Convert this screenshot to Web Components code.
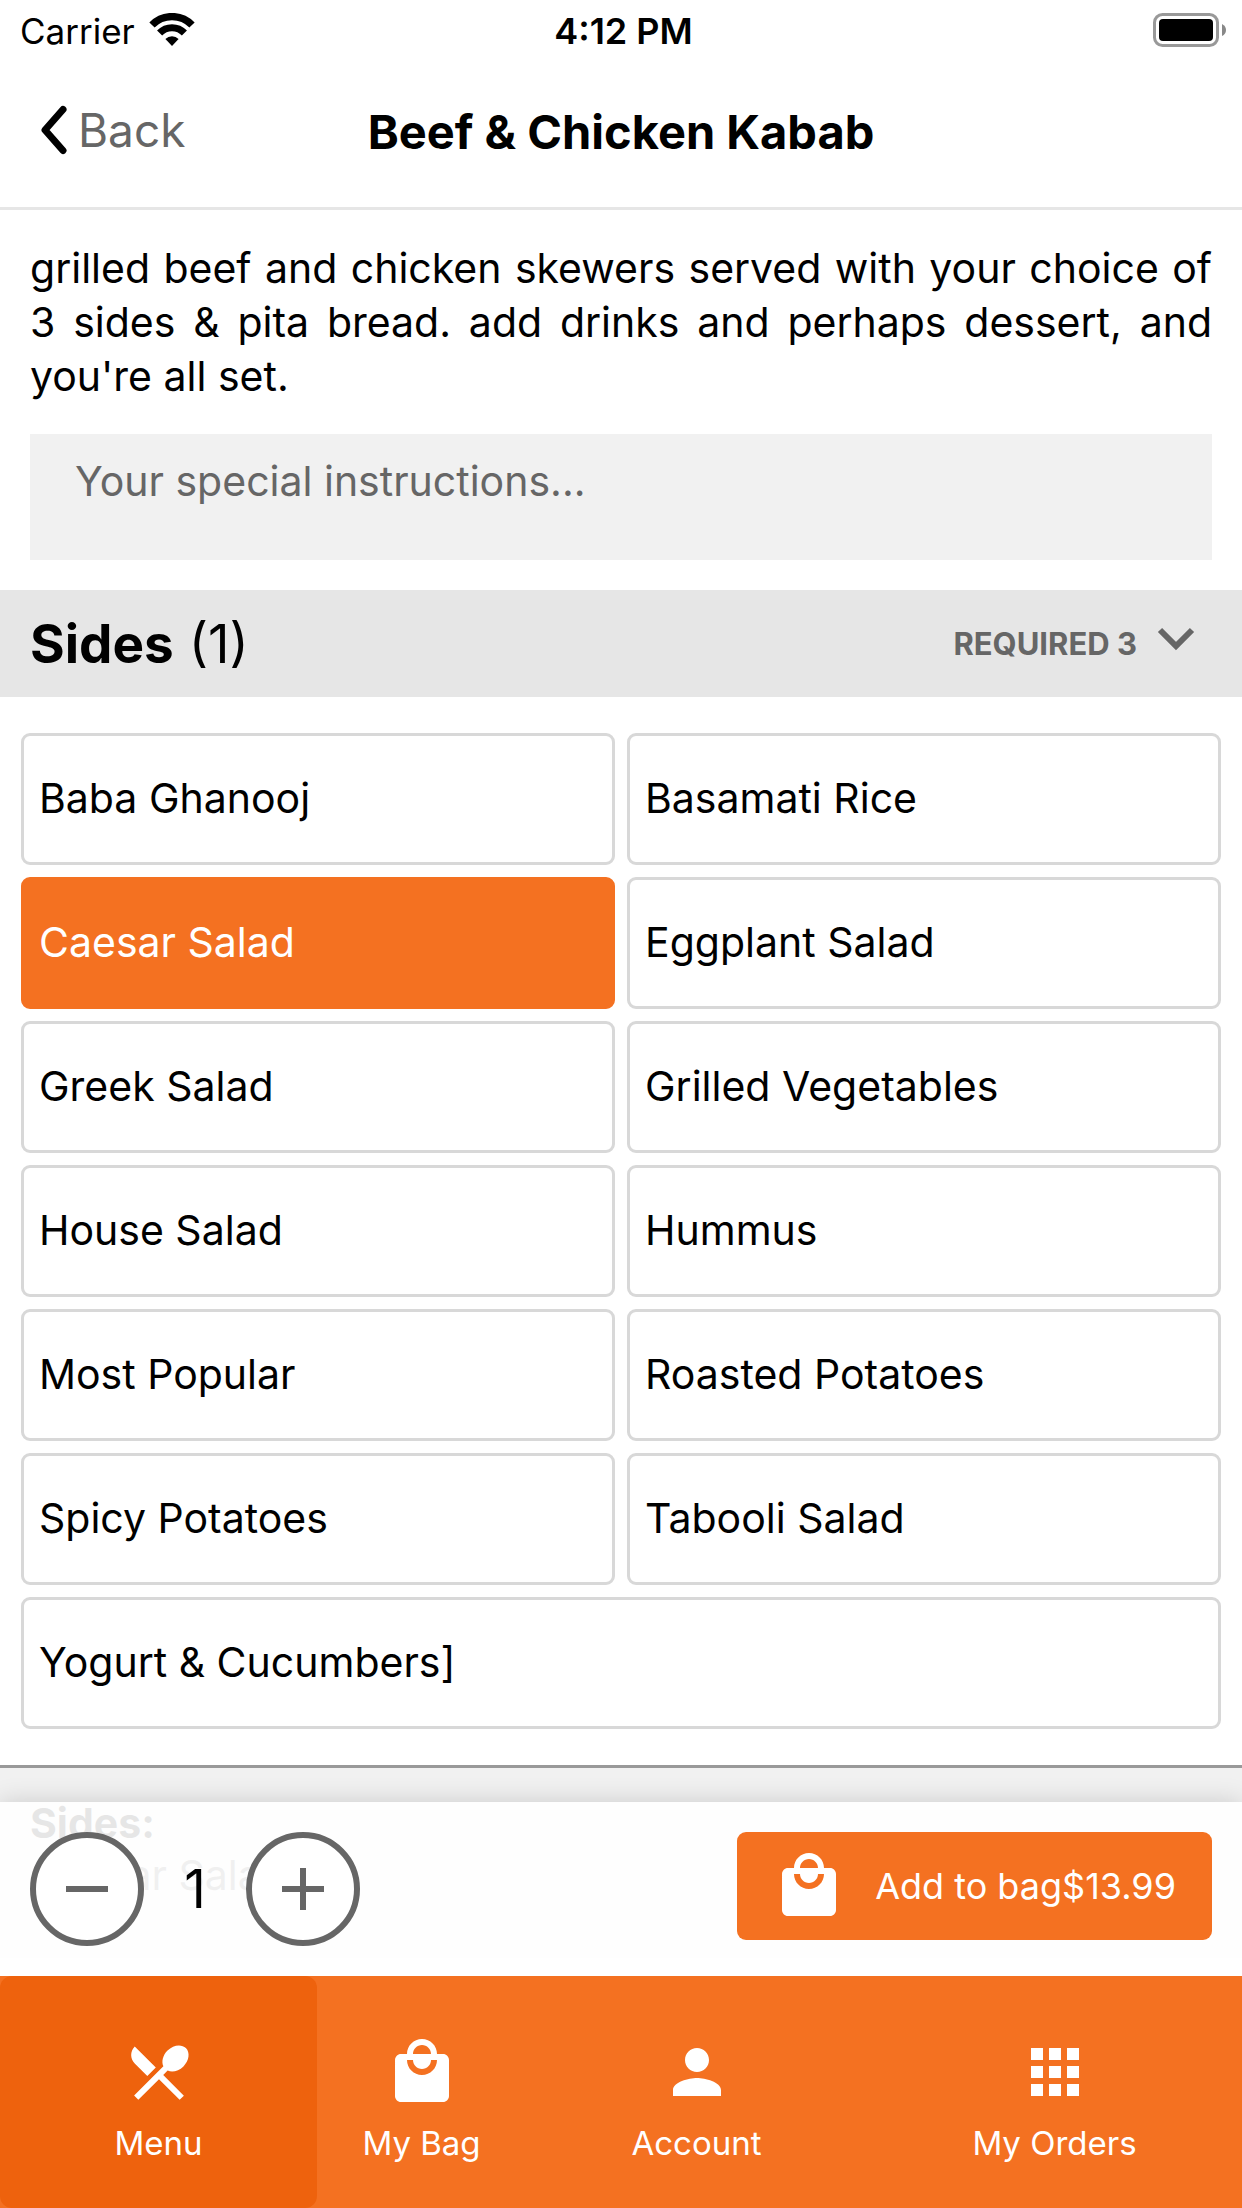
<!DOCTYPE html>
<html lang="en">
<head>
<meta charset="utf-8">
<meta name="viewport" content="width=device-width, initial-scale=1">
<title>Beef &amp; Chicken Kabab</title>
<style>
  html, body { margin: 0; height: 100%; }
  body {
    --brand: #f47121;
    --brand-dark: #ee620d;
    --muted: #666;
    font-family: Inter, "Liberation Sans", sans-serif;
    font-size: 41px;
    color: #000;
    background: #fff;
  }
</style>
</head>
<body>
<order-screen>
  <status-bar slot="top" carrier="Carrier" time="4:12 PM"></status-bar>
  <nav-header slot="top" back="Back">Beef &amp; Chicken Kabab</nav-header>
  <item-intro>grilled beef and chicken skewers served with your choice of 3 sides &amp; pita bread. add drinks and perhaps dessert, and you're all set.</item-intro>
  <option-group heading="Sides" count="(1)" rule="REQUIRED 3">
    <option-card>Baba Ghanooj</option-card>
    <option-card>Basamati Rice</option-card>
    <option-card checked>Caesar Salad</option-card>
    <option-card>Eggplant Salad</option-card>
    <option-card>Greek Salad</option-card>
    <option-card>Grilled Vegetables</option-card>
    <option-card>House Salad</option-card>
    <option-card>Hummus</option-card>
    <option-card>Most Popular</option-card>
    <option-card>Roasted Potatoes</option-card>
    <option-card>Spicy Potatoes</option-card>
    <option-card>Tabooli Salad</option-card>
    <option-card wide>Yogurt &amp; Cucumbers]</option-card>
  </option-group>
  <order-summary heading="Sides:">Caesar Salad</order-summary>
  <action-bar slot="actions" quantity="1">Add to bag$13.99</action-bar>
  <tab-bar slot="tabs">
    <tab-item icon="menu" active style="flex-grow:317">Menu</tab-item>
    <tab-item icon="bag" style="flex-grow:209">My Bag</tab-item>
    <tab-item icon="person" style="flex-grow:341">Account</tab-item>
    <tab-item icon="apps" style="flex-grow:375">My Orders</tab-item>
  </tab-bar>
</order-screen>

<script>
const ICONS = {
  menu: 'M8.1 13.34l2.83-2.83L3.91 3.5c-1.56 1.56-1.56 4.09 0 5.66l4.19 4.18zm6.78-1.81c1.53.71 3.68.21 5.27-1.38 1.91-1.91 2.28-4.65.81-6.12-1.46-1.46-4.2-1.1-6.12.81-1.59 1.59-2.09 3.74-1.38 5.27L3.7 19.87l1.41 1.41L12 14.41l6.88 6.88 1.41-1.41L13.41 13l1.47-1.47z',
  bag: 'M19 6h-2c0-2.76-2.24-5-5-5S7 3.24 7 6H5c-1.1 0-1.99.9-1.99 2L3 20c0 1.1.9 2 2 2h14c1.1 0 2-.9 2-2V8c0-1.1-.9-2-2-2zm-7-3c1.66 0 3 1.34 3 3H9c0-1.66 1.34-3 3-3zm0 10c-2.76 0-5-2.24-5-5h2c0 1.66 1.34 3 3 3s3-1.34 3-3h2c0 2.76-2.24 5-5 5z',
  person: 'M12 12c2.21 0 4-1.79 4-4s-1.79-4-4-4-4 1.79-4 4 1.79 4 4 4zm0 2c-2.67 0-8 1.34-8 4v2h16v-2c0-2.66-5.33-4-8-4z',
  apps: 'M4 8h4V4H4v4zm6 12h4v-4h-4v4zm-6 0h4v-4H4v4zm0-6h4v-4H4v4zm6 0h4v-4h-4v4zm6-10v4h4V4h-4zm-6 4h4V4h-4v4zm6 6h4v-4h-4v4zm0 6h4v-4h-4v4z'
};
const icon = name => `<svg class="icon" viewBox="0 0 24 24" aria-hidden="true"><path fill="currentColor" d="${ICONS[name]}"/></svg>`;

function define(tag, render) {
  customElements.define(tag, class extends HTMLElement {
    constructor() {
      super();
      this.attachShadow({ mode: 'open' });
    }
    connectedCallback() {
      const base = '<style>*{box-sizing:border-box}button,textarea{font:inherit;color:inherit;border:0;margin:0;padding:0;background:none}svg{display:block;flex:none}</style>';
      this.shadowRoot.innerHTML = base + render(name => this.getAttribute(name), this);
    }
  });
}

define('order-screen', () => `
  <style>
    :host { display: flex; flex-direction: column; height: 100vh; overflow: hidden; }
    .body { flex: 1; min-height: 0; position: relative; display: flex; flex-direction: column; }
    main { flex: 1; min-height: 0; overflow: hidden; }
    .overlay { position: absolute; left: 0; right: 0; bottom: 0; }
  </style>
  <slot name="top"></slot>
  <div class="body">
    <main><slot></slot></main>
    <div class="overlay"><slot name="actions"></slot></div>
  </div>
  <slot name="tabs"></slot>`);

define('status-bar', a => `
  <style>
    :host { display: grid; grid-template-columns: 1fr auto 1fr; align-items: center; height: 60px; padding: 0 15px 0 20px; font-size: 35px; line-height: 44px; }
    .left { display: flex; align-items: center; gap: 14px; }
    span { padding-top: 2px; }
    .time { font-size: 36px; font-weight: 600; }
    .right { justify-self: end; }
  </style>
  <div class="left"><span>${a('carrier')}</span>
    <svg width="46" height="34" viewBox="0 0 46 34" aria-hidden="true">
      <path d="M3 12 A28 28 0 0 1 43 12" fill="none" stroke="#000" stroke-width="7.4"/>
      <path d="M10.6 20 A17 17 0 0 1 35.4 20" fill="none" stroke="#000" stroke-width="7"/>
      <path d="M16.4 26 A9.4 9.4 0 0 1 29.6 26 L23 33 Z"/>
    </svg>
  </div>
  <span class="time">${a('time')}</span>
  <svg class="right" width="74" height="34" viewBox="0 0 74 34" aria-label="Battery full">
    <rect x="1.5" y="1.5" width="63" height="31" rx="8" fill="#fff" stroke="#999" stroke-width="3"/>
    <rect x="6" y="6" width="54" height="22" rx="4"/>
    <path d="M69 11 Q73 13 73 17 Q73 21 69 23 Z" fill="#888"/>
  </svg>`);

define('nav-header', a => `
  <style>
    :host { display: grid; grid-template-columns: 1fr auto 1fr; align-items: center; height: 150px; padding: 0 38px 8px; border-bottom: 3px solid #e6e6e6; box-sizing: border-box; }
    button { justify-self: start; display: flex; align-items: center; gap: 10px; font-size: 46px; line-height: 56px; color: var(--muted); }
    h1 { margin: 0; padding-top: 4px; font-size: 47px; line-height: 56px; font-weight: 700; }
  </style>
  <button type="button">
    <svg width="30" height="50" viewBox="0 0 30 50" aria-hidden="true"><path d="M25 4.5 L7 25 L25 45.5" fill="none" stroke="#000" stroke-width="7" stroke-linecap="round" stroke-linejoin="round"/></svg>
    <span>${a('back')}</span>
  </button>
  <h1><slot></slot></h1>`);

define('item-intro', () => `
  <style>
    :host { display: block; padding: 31px 30px 30px; }
    p { margin: 0; line-height: 54px; text-align: justify; }
    textarea { display: block; width: 100%; height: 126px; margin-top: 31px; padding: 20px 45px; line-height: 54px; background: #f1f1f1; resize: none; outline: 0; overflow: hidden; border-radius: 0; }
    textarea::placeholder { color: var(--muted); opacity: 1; }
  </style>
  <p><slot></slot></p>
  <textarea placeholder="Your special instructions..." aria-label="Your special instructions"></textarea>`);

define('option-group', a => `
  <style>
    :host { display: block; }
    header { display: flex; align-items: center; justify-content: space-between; height: 107px; padding: 0 45px 0 30px; background: #e6e6e6; }
    h2 { margin: 0; font-size: 53px; line-height: 66px; font-weight: 400; }
    b { font-weight: 700; }
    button { display: flex; align-items: flex-start; gap: 18px; font-size: 31px; line-height: 36px; font-weight: 700; color: var(--muted); }
    svg { height: 30px; }
    .grid { display: grid; grid-template-columns: 1fr 1fr; gap: 12px; padding: 36px 21px; }
  </style>
  <header>
    <h2><b>${a('heading')}</b> ${a('count')}</h2>
    <button type="button" aria-expanded="true"><span>${a('rule')}</span>
      <svg width="42" height="30" viewBox="0 0 42 30" aria-hidden="true"><path d="M5 4 L21 20 L37 4" fill="none" stroke="currentColor" stroke-width="6"/></svg>
    </button>
  </header>
  <div class="grid"><slot></slot></div>`);

define('option-card', (a, el) => `
  <style>
    :host { display: block; }
    :host([wide]) { grid-column: 1 / -1; }
    label { display: flex; align-items: center; height: 132px; padding: 0 15px 2px; border: 3px solid #d8d8d8; border-radius: 9px; line-height: 54px; cursor: pointer; }
    input { appearance: none; width: 0; height: 0; margin: 0; }
    label:has(:checked) { background: var(--brand); border-color: var(--brand); color: #fff; }
  </style>
  <label><input type="checkbox" ${el.hasAttribute('checked') ? 'checked' : ''}><span><slot></slot></span></label>`);

define('order-summary', a => `
  <style>
    :host { display: block; padding: 29px 30px 57px; border-top: 3px solid #999; background: #f1f1f1; }
    h3, p { margin: 0; font-size: 41px; line-height: 52px; }
    h3 { font-weight: 700; }
    p { color: var(--muted); }
  </style>
  <h3>${a('heading')}</h3>
  <p><slot></slot></p>`);

define('action-bar', a => `
  <style>
    :host { display: flex; justify-content: space-between; align-items: flex-start; padding: 30px; background: rgba(255,255,255,.9); box-shadow: 0 0 24px rgba(0,0,0,.16); }
    .stepper { display: flex; align-items: center; }
    .stepper button { width: 114px; height: 114px; border: 6px solid var(--muted); border-radius: 50%; background: #fff; color: var(--muted); display: grid; place-items: center; }
    output { width: 102px; text-align: center; font-size: 53px; line-height: 66px; }
    .add { display: flex; align-items: center; gap: 30px; height: 108px; padding: 0 36px; border-radius: 9px; background: var(--brand); color: #fff; font-size: 36px; line-height: 44px; }
    .icon { width: 72px; height: 72px; }
  </style>
  <div class="stepper">
    <button type="button" aria-label="Remove one"><svg width="42" height="42" viewBox="0 0 42 42"><path d="M0 21H42" stroke="currentColor" stroke-width="6"/></svg></button>
    <output>${a('quantity')}</output>
    <button type="button" aria-label="Add one"><svg width="42" height="42" viewBox="0 0 42 42"><path d="M0 21H42M21 0V42" stroke="currentColor" stroke-width="6"/></svg></button>
  </div>
  <button type="button" class="add">${icon('bag')}<span><slot></slot></span></button>`);

define('tab-bar', () => `
  <style>
    :host { display: block; background: var(--brand); color: #fff; position: relative; }
    nav { display: flex; height: 232px; }
  </style>
  <nav><slot></slot></nav>`);

define('tab-item', (a, el) => `
  <style>
    :host { display: block; flex: 1 1 0; }
    a { display: flex; flex-direction: column; align-items: center; gap: 15px; height: 100%; padding-top: 60px; border-radius: 12px; color: inherit; text-decoration: none; font-size: 33px; line-height: 40px; }
    :host([active]) a { background: var(--brand-dark); }
    .icon { width: 72px; height: 72px; }
  </style>
  <a href="#" ${el.hasAttribute('active') ? 'aria-current="page"' : ''}>${icon(a('icon'))}<span><slot></slot></span></a>`);
</script>
</body>
</html>
